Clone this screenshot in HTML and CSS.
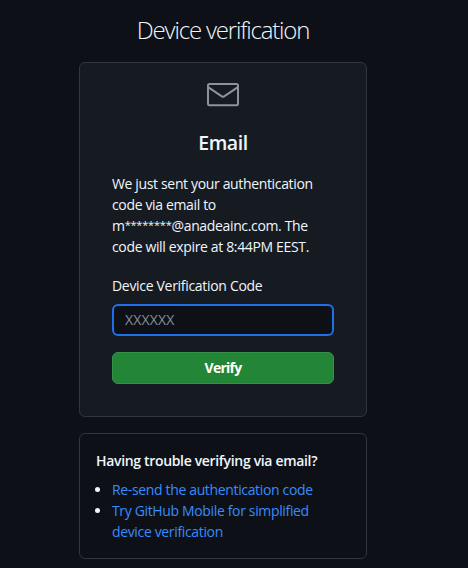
FILE: index.html
```html
<!DOCTYPE html>
<html lang="en">
<head>
<meta charset="utf-8">
<title>Device verification</title>
<link rel="stylesheet" href="styles.css">
</head>
<body>
<main class="auth">
  <h1 class="title">Device verification</h1>
  <section class="card">
    <svg class="mail" viewBox="0 0 24 24" width="32" height="32" aria-hidden="true"><path d="M1.75 3h20.5c.966 0 1.75.784 1.75 1.75v14a1.75 1.75 0 0 1-1.75 1.75H1.75A1.75 1.75 0 0 1 0 18.75v-14C0 3.784.784 3 1.75 3ZM1.5 7.412V18.75c0 .138.112.25.25.25h20.5a.25.25 0 0 0 .25-.25V7.412l-9.52 6.433c-.592.4-1.368.4-1.96 0Zm0-2.662v.852l10.36 7a.25.25 0 0 0 .28 0l10.36-7V4.75a.25.25 0 0 0-.25-.25H1.75a.25.25 0 0 0-.25.25Z"/></svg>
    <h2 class="heading">Email</h2>
    <p class="message">We just sent your authentication<br>code via email to<br>m<span class="mask">********</span>@anadeainc.com. The<br>code will expire at 8:44PM EEST.</p>
    <form class="form">
      <label class="label" for="otp">Device Verification Code</label>
      <input class="input" id="otp" type="text" placeholder="XXXXXX">
      <button class="button" type="button">Verify</button>
    </form>
  </section>
  <section class="help">
    <h3 class="help-title">Having trouble verifying via email?</h3>
    <ul class="links">
      <li><a href="#">Re-send the authentication code</a></li>
      <li><a href="#">Try GitHub Mobile for simplified<br>device verification</a></li>
    </ul>
  </section>
</main>
</body>
</html>
```
FILE: styles.css
```css
* { box-sizing: border-box; }
body {
  margin: 0;
  background: #0d1117;
  color: #f0f6fc;
  font: 14px/21px "Open Sans", "Noto Sans", sans-serif;
  letter-spacing: -0.35px;
  overflow: hidden;
}
h1, h2, h3, p, ul { margin: 0; padding: 0; }
.auth { width: 288px; margin-left: 79px; padding-top: 12px; }
.title {
  height: 50px;
  font-size: 24px;
  line-height: 35px;
  font-weight: 300;
  letter-spacing: -1.18px;
  text-align: center;
  white-space: nowrap;
}
.card {
  height: 355px;
  padding: 16px 32px;
  background: #161b22;
  border: 1px solid #30363d;
  border-radius: 6px;
}
.mail { display: block; margin: 0 auto; fill: #8b949e; }
.heading {
  margin-top: 17px;
  font-size: 19.5px;
  line-height: 30px;
  font-weight: 600;
  letter-spacing: -0.4px;
  text-align: center;
}
.message { margin-top: 15px; white-space: nowrap; }
.mask { font-size: 11px; line-height: 0; vertical-align: 2px; letter-spacing: -0.2px; }
.form { display: flex; flex-direction: column; margin-top: 18px; }
.label { height: 29px; letter-spacing: -0.31px; }
.input, .button {
  width: 100%;
  height: 32px;
  border-radius: 6px;
  font: inherit;
}
.input {
  padding: 0 11px 2px;
  background: #0d1117;
  color: #e6edf3;
  border: 2px solid #1f6feb;
  outline: none;
  letter-spacing: 0.15px;
}
.input::placeholder { color: #868e99; opacity: 1; }
.button {
  margin-top: 16px;
  padding: 0 0 1px;
  background: #238636;
  border: 1px solid #36924a;
  color: #fff;
  font-weight: 700;
  letter-spacing: -0.75px;
}
.help {
  height: 126px;
  margin-top: 16px;
  padding: 16px;
  border: 1px solid #30363d;
  border-radius: 6px;
  white-space: nowrap;
}
.help-title { font-size: 14px; line-height: 21px; font-weight: 600; letter-spacing: -0.33px; }
.links { margin-top: 8px; padding-left: 16px; }
.links li::marker { color: #f0f6fc; }
.links a { color: #388bfd; text-decoration: none; }
```
